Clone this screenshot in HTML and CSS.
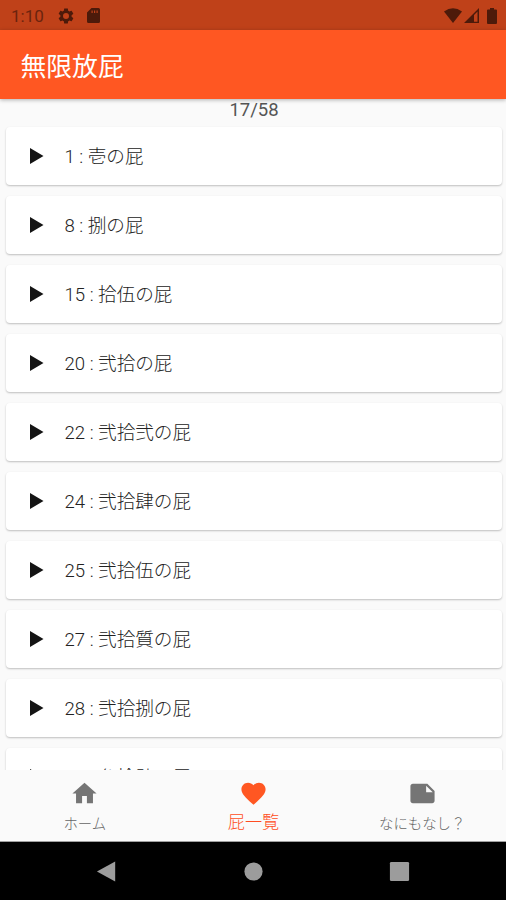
FILE: index.html
```html
<!DOCTYPE html>
<html lang="ja">
<head>
<meta charset="utf-8">
<title>無限放屁</title>
<link rel="stylesheet" href="styles.css">
</head>
<body>
<div class="screen">
  <div class="status">
    <span class="clock">1:10</span>
    <svg class="gear" viewBox="0 0 24 24"><path d="M19.43 12.98c.04-.32.07-.64.07-.98s-.03-.66-.07-.98l2.11-1.65c.19-.15.24-.42.12-.64l-2-3.46c-.12-.22-.39-.3-.61-.22l-2.49 1c-.52-.4-1.08-.73-1.69-.98l-.38-2.65C14.46 2.18 14.25 2 14 2h-4c-.25 0-.46.18-.49.42l-.38 2.65c-.61.25-1.17.59-1.69.98l-2.49-1c-.23-.09-.49 0-.61.22l-2 3.46c-.13.22-.07.49.12.64l2.11 1.65c-.04.32-.07.65-.07.98s.03.66.07.98l-2.11 1.65c-.19.15-.24.42-.12.64l2 3.46c.12.22.39.3.61.22l2.49-1c.52.4 1.08.73 1.69.98l.38 2.65c.03.24.24.42.49.42h4c.25 0 .46-.18.49-.42l.38-2.65c.61-.25 1.17-.59 1.69-.98l2.49 1c.23.09.49 0 .61-.22l2-3.46c.12-.22.07-.49-.12-.64l-2.11-1.65zM12 16a4 4 0 1 1 0-8 4 4 0 0 1 0 8z"/></svg>
    <svg class="sd" viewBox="0 0 13 15"><path fill-rule="evenodd" d="M4.5 0H11.5Q13 0 13 1.5V13.5Q13 15 11.5 15H1.5Q0 15 0 13.5V4.5ZM4.5 2.5V5H5.7V2.5ZM7 2.5V5H8.2V2.5ZM9.5 2.5V5H10.7V2.5Z"/></svg>
    <svg class="wifi" viewBox="0 0 18 15"><path d="M0 3.5Q9-3 18 3.5L9 15Z"/></svg>
    <svg class="signal" viewBox="0 0 15 15"><path fill-rule="evenodd" d="M15 0V15H0ZM13.5 3.5L10 7V13.7H13.5Z"/></svg>
    <svg class="battery" viewBox="0 0 10 16"><path d="M3 0H7V1.5H9Q10 1.5 10 2.5V15Q10 16 9 16H1Q0 16 0 15V2.5Q0 1.5 1 1.5H3Z"/></svg>
  </div>
  <header class="appbar"><h1>無限放屁</h1></header>
  <main class="content">
    <div class="count">17/58</div>
    <div class="list">
      <div class="card"><i class="play"></i><span>1 : 壱の屁</span></div>
      <div class="card"><i class="play"></i><span>8 : 捌の屁</span></div>
      <div class="card"><i class="play"></i><span>15 : 拾伍の屁</span></div>
      <div class="card"><i class="play"></i><span>20 : 弐拾の屁</span></div>
      <div class="card"><i class="play"></i><span>22 : 弐拾弐の屁</span></div>
      <div class="card"><i class="play"></i><span>24 : 弐拾肆の屁</span></div>
      <div class="card"><i class="play"></i><span>25 : 弐拾伍の屁</span></div>
      <div class="card"><i class="play"></i><span>27 : 弐拾質の屁</span></div>
      <div class="card"><i class="play"></i><span>28 : 弐拾捌の屁</span></div>
      <div class="card"><i class="play"></i><span>34 : 参拾肆の屁</span></div>
    </div>
  </main>
  <nav class="tabs">
    <div class="tab"><svg viewBox="0 0 24 24"><path d="M10 20v-6h4v6h5v-8h3L12 3 2 12h3v8z"/></svg><span>ホーム</span></div>
    <div class="tab active"><svg viewBox="0 0 24 24"><path d="M12 21.35l-1.45-1.32C5.4 15.36 2 12.28 2 8.5 2 5.42 4.42 3 7.5 3c1.74 0 3.41.81 4.5 2.09C13.09 3.81 14.76 3 16.5 3 19.58 3 22 5.42 22 8.5c0 3.78-3.4 6.86-8.55 11.54z"/></svg><span>屁一覧</span></div>
    <div class="tab"><svg viewBox="0 0 24 24"><path fill-rule="evenodd" d="M16 4H4c-1.1 0-2 .9-2 2v12.01c0 1.1.9 1.99 2 1.99h16c1.1 0 2-.9 2-2v-8zM15 5.5l5.5 5.5H15z"/></svg><span>なにもなし？</span></div>
  </nav>
  <div class="sysnav">
    <svg viewBox="0 0 24 24"><path d="M20 1.5V22.5L1 12Z"/></svg>
    <svg viewBox="0 0 24 24"><circle cx="12" cy="12" r="9.5"/></svg>
    <svg viewBox="0 0 24 24"><rect x="2" y="2" width="20" height="20" rx="1.5"/></svg>
  </div>
</div>
</body>
</html>
```
FILE: styles.css
```css
* { box-sizing: border-box; }
body {
  margin: 0;
  font-family: Roboto, "Noto Sans CJK JP", sans-serif;
  background: #fafafa;
}
.screen {
  display: flex;
  flex-direction: column;
  width: 506px;
  height: 900px;
  overflow: hidden;
}
.status {
  flex: none;
  display: flex;
  align-items: center;
  height: 30px;
  padding: 1px 9px 0 11px;
  background: #bf4119;
  color: #6b240e;
}
.status svg { flex: none; fill: #4d1a0a; }
.clock { width: 46px; font-size: 17px; line-height: 30px; }
.gear { width: 18px; height: 18px; }
.sd { width: 13px; height: 15px; margin-left: 12px; }
.wifi { width: 18px; height: 15px; margin-left: auto; }
.signal { width: 15px; height: 15px; margin-left: 2px; }
.battery { width: 10px; height: 16px; margin-left: 8px; }
.appbar {
  flex: none;
  display: flex;
  align-items: center;
  height: 69px;
  padding-left: 20.5px;
  background: #ff5722;
  box-shadow: 0 1px 4px rgba(0, 0, 0, .3);
  z-index: 1;
}
.appbar h1 {
  margin: 0;
  padding-top: 4px;
  color: #fff;
  font-size: 25.8px;
  font-weight: 400;
  line-height: 38px;
}
.content { flex: 1; min-height: 0; overflow: hidden; }
.count {
  height: 28px;
  padding-left: 2px;
  color: #555;
  font-size: 18.5px;
  line-height: 23px;
  text-align: center;
}
.list {
  display: flex;
  flex-direction: column;
  gap: 11px;
  padding: 0 4px 0 6px;
}
.card {
  flex: none;
  display: flex;
  align-items: center;
  height: 58px;
  padding-left: 24px;
  background: #fff;
  border-radius: 4px;
  box-shadow: 0 1px 2px rgba(0, 0, 0, .24);
  color: #222;
  font-size: 18.6px;
  font-weight: 300;
  line-height: 28px;
}
.card span { padding-top: 2px; }
.play {
  width: 13.5px;
  height: 16px;
  margin-right: 21px;
  background: #141414;
  clip-path: polygon(0 0, 100% 50%, 0 100%);
}
.tabs {
  flex: none;
  display: flex;
  height: 72px;
  background: #fafafa;
  border-bottom: 1px solid #a0a0a0;
  z-index: 1;
}
.tab {
  flex: 1;
  display: flex;
  flex-direction: column;
  align-items: center;
  padding: 9px 0 0 1px;
  color: #757575;
  font-size: 14.4px;
  font-weight: 300;
  line-height: 22px;
}
.tab span { color: #666; }
.tab svg { width: 29px; height: 29px; margin-bottom: 5.5px; fill: currentColor; }
.tab.active { color: #ff5722; font-size: 17.2px; }
.tab.active span { color: #ff4d22; }
.tab.active svg { margin-bottom: 3px; }
.sysnav {
  flex: none;
  display: flex;
  justify-content: space-between;
  align-items: center;
  height: 58px;
  padding: 0 95.5px;
  background: #000;
}
.sysnav svg { width: 23px; height: 23px; fill: #9c9c9c; }
```
